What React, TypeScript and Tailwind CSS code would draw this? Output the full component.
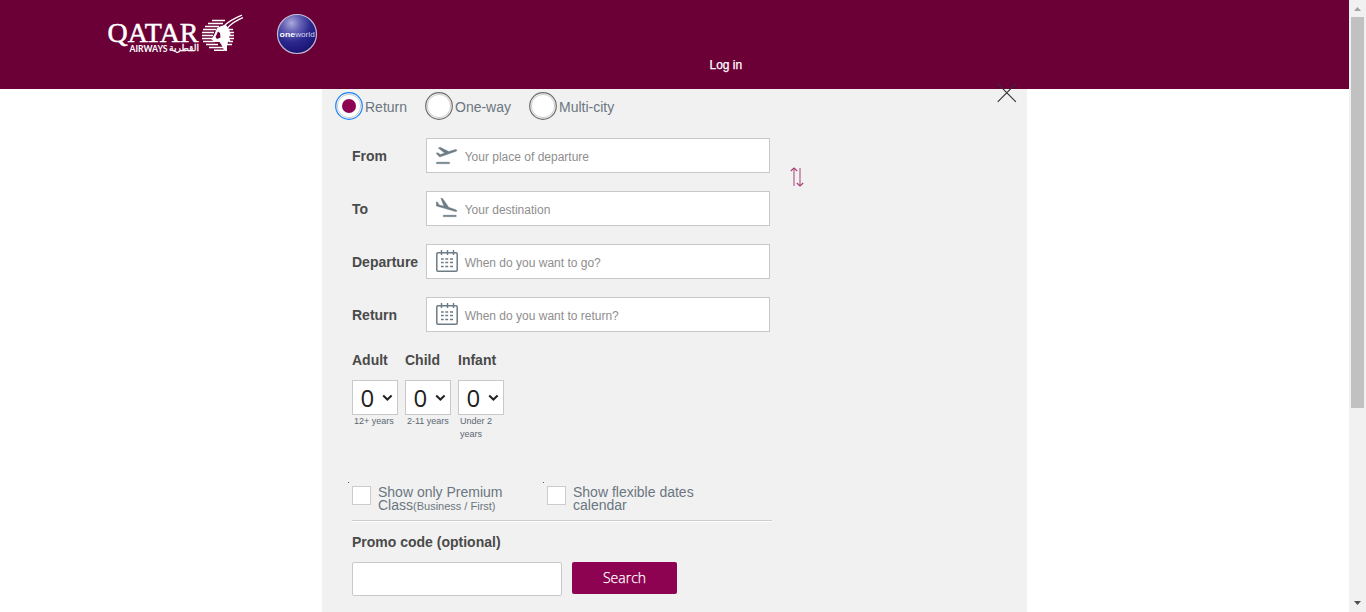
import React from "react";

const sans = "font-['Liberation_Sans',Arial,sans-serif]";

function Logo() {
  return (
    <svg width="138" height="44" viewBox="107 12 138 44" role="img" aria-label="Qatar Airways" fill="#fff">
      <text x="107.5" y="41.8" fontSize="27.5" textLength="91" lengthAdjust="spacingAndGlyphs" fontFamily="Liberation Serif, serif" stroke="#fff" strokeWidth="0.5">QATAR</text>
      <text x="129.5" y="51.6" fontSize="8.8" fontWeight="bold" textLength="38" lengthAdjust="spacingAndGlyphs" fontFamily="Lato, sans-serif">AIRWAYS</text>
      <text x="169" y="51" fontSize="9" textLength="30" lengthAdjust="spacingAndGlyphs" fontFamily="DejaVu Sans, sans-serif" stroke="#fff" strokeWidth="0.3">القطرية</text>
      <g stroke="#fff" strokeWidth="1.4" fill="none">
        <path d="M212 20.5h13M208 23.5h15M205 26.5h14M203 29.5h13M202 32.5h12M202 35.5h11M202 38.5h11M203 41.5h12M206 44.5h12M209 47.5h14M214 50.2h10" />
        <path d="M229 29.5h4M230 32.5h4M230 35.5h4M229 38.5h5M229 41.5h4M227 44.5h5" />
      </g>
      <path d="M217 28 221 26 226 25 229 29 230.5 34 229 38 230.5 41 228 42 227 46 227 51 224.5 51 221.5 45 219.5 42 214.5 42 211.5 39.5 214.5 34Z" />
      <path d="M218 31.5 215.5 37 217 39 220.5 37.5 220 33Z" fill="#6b0037" />
      <path d="M223.5 26.5C229 21 235 18 242 15.2M227 28.5C232 22.5 237 20 243 17.6" stroke="#fff" strokeWidth="1.3" fill="none" />
    </svg>
  );
}

function Oneworld() {
  return (
    <svg width="42" height="42" viewBox="0 0 42 42" role="img" aria-label="oneworld">
      <defs>
        <radialGradient id="orb" cx="0.36" cy="0.22" r="0.82">
          <stop offset="0" stopColor="#aaa9db" />
          <stop offset="0.28" stopColor="#6562b5" />
          <stop offset="0.6" stopColor="#2b288e" />
          <stop offset="1" stopColor="#17116f" />
        </radialGradient>
      </defs>
      <circle cx="21" cy="21" r="19.5" fill="url(#orb)" stroke="#c3bdd5" strokeWidth="1.2" />
      <text x="3.6" y="23.5" fontSize="8" fontWeight="bold" fill="#fff" textLength="15.5" lengthAdjust="spacingAndGlyphs" fontFamily="Liberation Sans, sans-serif">one</text>
      <text x="19.2" y="23.5" fontSize="8" fill="#d8d6f0" textLength="19.5" lengthAdjust="spacingAndGlyphs" fontFamily="Liberation Sans, sans-serif">world</text>
    </svg>
  );
}

function TakeOff() {
  return (
    <svg width="22" height="22" viewBox="0 0 22 22" fill="#6d7b85" stroke="#6d7b85" strokeWidth=".4" strokeLinejoin="round">
      <path d="M.5 18.2h13v1.5H.5z" />
      <path d="M.1 9.2 1.8 8.7l2.5 1.8 4.4-1.4L2.2 4l2-.7 8.6 4.3 6.5-2.1c1.4-.4 2.3 1 .8 1.7L3.7 13.1Z" />
    </svg>
  );
}

function Landing() {
  return (
    <svg width="22" height="22" viewBox="0 0 22 22" fill="#6d7b85" stroke="#6d7b85" strokeWidth=".4" strokeLinejoin="round">
      <path d="M7.2 18.2h13v1.5h-13z" />
      <path d="m.2 4.8 1.5.5 1.2 2.5 5 1.4L4.8 1l2 .7 5.9 8.6 7 2.4c1.7.6 1.4 2.2-.1 1.9L.4 9Z" />
    </svg>
  );
}

function Calendar() {
  return (
    <svg width="22" height="22" viewBox="0 0 22 22" fill="none" stroke="#6d7b85">
      <rect x=".8" y="2.8" width="20.4" height="18.4" rx="1.2" strokeWidth="1.5" />
      <path d="M5.5 0v5M11.5 0v5M17.5 0v5" strokeWidth="1.4" />
      <path d="M5 9h2.7m1.6 0h2.9m1.8 0h3M5 12.5h2.7m1.6 0h2.9m1.8 0h3M5 16.5h2.7m1.6 0h2.9m1.8 0h3" strokeWidth="1.7" />
    </svg>
  );
}

function Radio({ label, checked, width }: { label: string; checked?: boolean; width: string }) {
  return (
    <label className={`flex h-7 items-center ${width}`}>
      <svg width="28" height="28" viewBox="0 0 28 28" className="shrink-0">
        <circle cx="14" cy="14" r="13.3" fill="#f8f8f8" stroke={checked ? "#1682fb" : "#6b6b6b"} strokeWidth="1.2" />
        <circle cx="14" cy="14" r="11.6" fill="#fff" stroke="#ccc" strokeWidth="1" />
        {checked && <circle cx="14" cy="14" r="7" fill="#8e0351" />}
      </svg>
      <span className="ml-[2px] mt-[2px] whitespace-nowrap text-[14px] leading-5 text-[#6b7680]">{label}</span>
    </label>
  );
}

function Field({ label, placeholder, icon }: { label: string; placeholder: string; icon: React.ReactNode }) {
  return (
    <div className="flex h-[35px] items-center">
      <span className="w-[74px] text-[14px] font-bold leading-5 text-[#4a4a4a]">{label}</span>
      <div className="flex h-[35px] w-[344px] items-center border border-[#c9c9c9] bg-white pl-[9px]">
        <span className="mb-[2px]">{icon}</span>
        <span className="ml-[6.7px] mt-[2px] text-[12px] leading-4 text-[#8e8e8e]">{placeholder}</span>
      </div>
    </div>
  );
}

function Count({ label, hint }: { label: string; hint: string }) {
  return (
    <div className="flex w-[46px] flex-col">
      <span className="h-[30px] shrink-0 whitespace-nowrap text-[14px] font-bold leading-5 text-[#4a4a4a]">{label}</span>
      <div className="flex h-[35px] shrink-0 items-start border border-[#c9c9c9] bg-white pl-[7.5px]">
        <span className="mt-px w-[14px] font-['Open_Sans',sans-serif] text-[24px] leading-8 text-[#222]">0</span>
        <svg width="11" height="8" viewBox="0 0 11 8" className="ml-[7.5px] mt-[12.5px]" fill="none" stroke="#222" strokeWidth="2">
          <path d="m1.2 1.5 4.2 4 4.2-4" />
        </svg>
      </div>
      <span className="ml-[2px] w-[46px] text-[9px] leading-[13px] text-[#5c6771]">{hint}</span>
    </div>
  );
}

function Check({ children }: { children: React.ReactNode }) {
  return (
    <label className="flex w-[195px] items-start">
      <span className="mr-px size-px shrink-0 bg-[#555]" />
      <span className="ml-[2px] mt-[4px] size-[19px] shrink-0 border border-[#ccc] bg-white" />
      <span className="ml-[7px] mt-1 text-[14px] leading-[13px] text-[#6b7680]">{children}</span>
    </label>
  );
}

export default function App() {
  return (
    <div className={`flex h-[612px] w-[1366px] overflow-hidden bg-white ${sans}`}>
      <div className="relative flex w-[1349px] flex-col">
        <header className="flex h-[89px] shrink-0 items-start bg-[#6b0037] pl-[107px]">
          <div className="mt-3 h-11"><Logo /></div>
          <div className="ml-[31px] mt-[13px]"><Oneworld /></div>
          <a className="ml-[391.5px] mt-[57px] text-[12px] leading-4 text-white [-webkit-text-stroke:0.25px_#fff]">Log in</a>
        </header>
        <main className="ml-[322px] flex h-[523px] w-[705px] flex-col bg-[#f1f1f1]">
          <div className="ml-[13px] mt-[3px] flex">
            <Radio label="Return" checked width="w-[90px]" />
            <Radio label="One-way" width="w-[104px]" />
            <Radio label="Multi-city" width="w-[100px]" />
          </div>
          <div className="ml-[30px] mt-[18px] flex">
            <div className="flex flex-col gap-[18px]">
              <Field label="From" placeholder="Your place of departure" icon={<TakeOff />} />
              <Field label="To" placeholder="Your destination" icon={<Landing />} />
              <Field label="Departure" placeholder="When do you want to go?" icon={<Calendar />} />
              <Field label="Return" placeholder="When do you want to return?" icon={<Calendar />} />
            </div>
            <svg width="14" height="20" viewBox="0 0 14 20" className="ml-[19.5px] mt-[29px]" fill="none" stroke="#a63873">
              <path d="M4 19V1.5M10 1v17.5" strokeWidth="1.6" opacity=".6" />
              <path d="m.8 4 3.2-3 3.2 3M6.8 16l3.2 3 3.2-3" strokeWidth="1.1" />
            </svg>
          </div>
          <div className="ml-[30px] mt-[18px] flex h-[92px] gap-[7px]">
            <Count label="Adult" hint="12+ years" />
            <Count label="Child" hint="2-11 years" />
            <Count label="Infant" hint="Under 2 years" />
          </div>
          <div className="ml-[26px] mt-[40px] flex h-[38px]">
            <Check>Show only Premium<br />Class<span className="text-[11px]">(Business / First)</span></Check>
            <Check>Show flexible dates calendar</Check>
          </div>
          <div className="ml-[30px] h-[2px] w-[420px] border-t border-[#ccc] bg-white" />
          <div className="ml-[30px] mt-[10px] h-[30px] text-[14px] font-bold leading-5 text-[#4a4a4a]">Promo code (optional)</div>
          <div className="ml-[30px] flex items-start gap-[10px]">
            <div className="h-[34px] w-[210px] rounded-[2px] border border-[#c9c9c9] bg-white" />
            <button className="h-8 w-[105px] rounded-[2px] bg-[#8e0351] font-['Open_Sans',sans-serif] text-[14px] font-light leading-8 text-white [-webkit-text-stroke:0.25px_#fff]">Search</button>
          </div>
        </main>
        <svg className="absolute left-[997px] top-[83px]" width="20" height="20" viewBox="0 0 20 20" fill="none" stroke="#303030" strokeWidth="1.1">
          <path d="m.7.7 18.2 18.2M18.9.7.7 18.9" />
        </svg>
      </div>
      <div className="flex w-[17px] flex-col items-center justify-between bg-[#f1f1f1]">
        <div className="flex flex-col items-center">
          <svg width="17" height="17" viewBox="0 0 17 17"><path d="M5 11h7L8.5 7z" fill="#a3a3a3" /></svg>
          <div className="h-[391px] w-[13px] bg-[#c1c1c1]" />
        </div>
        <svg width="17" height="17" viewBox="0 0 17 17"><path d="M5 6h7l-3.5 4z" fill="#505050" /></svg>
      </div>
    </div>
  );
}
